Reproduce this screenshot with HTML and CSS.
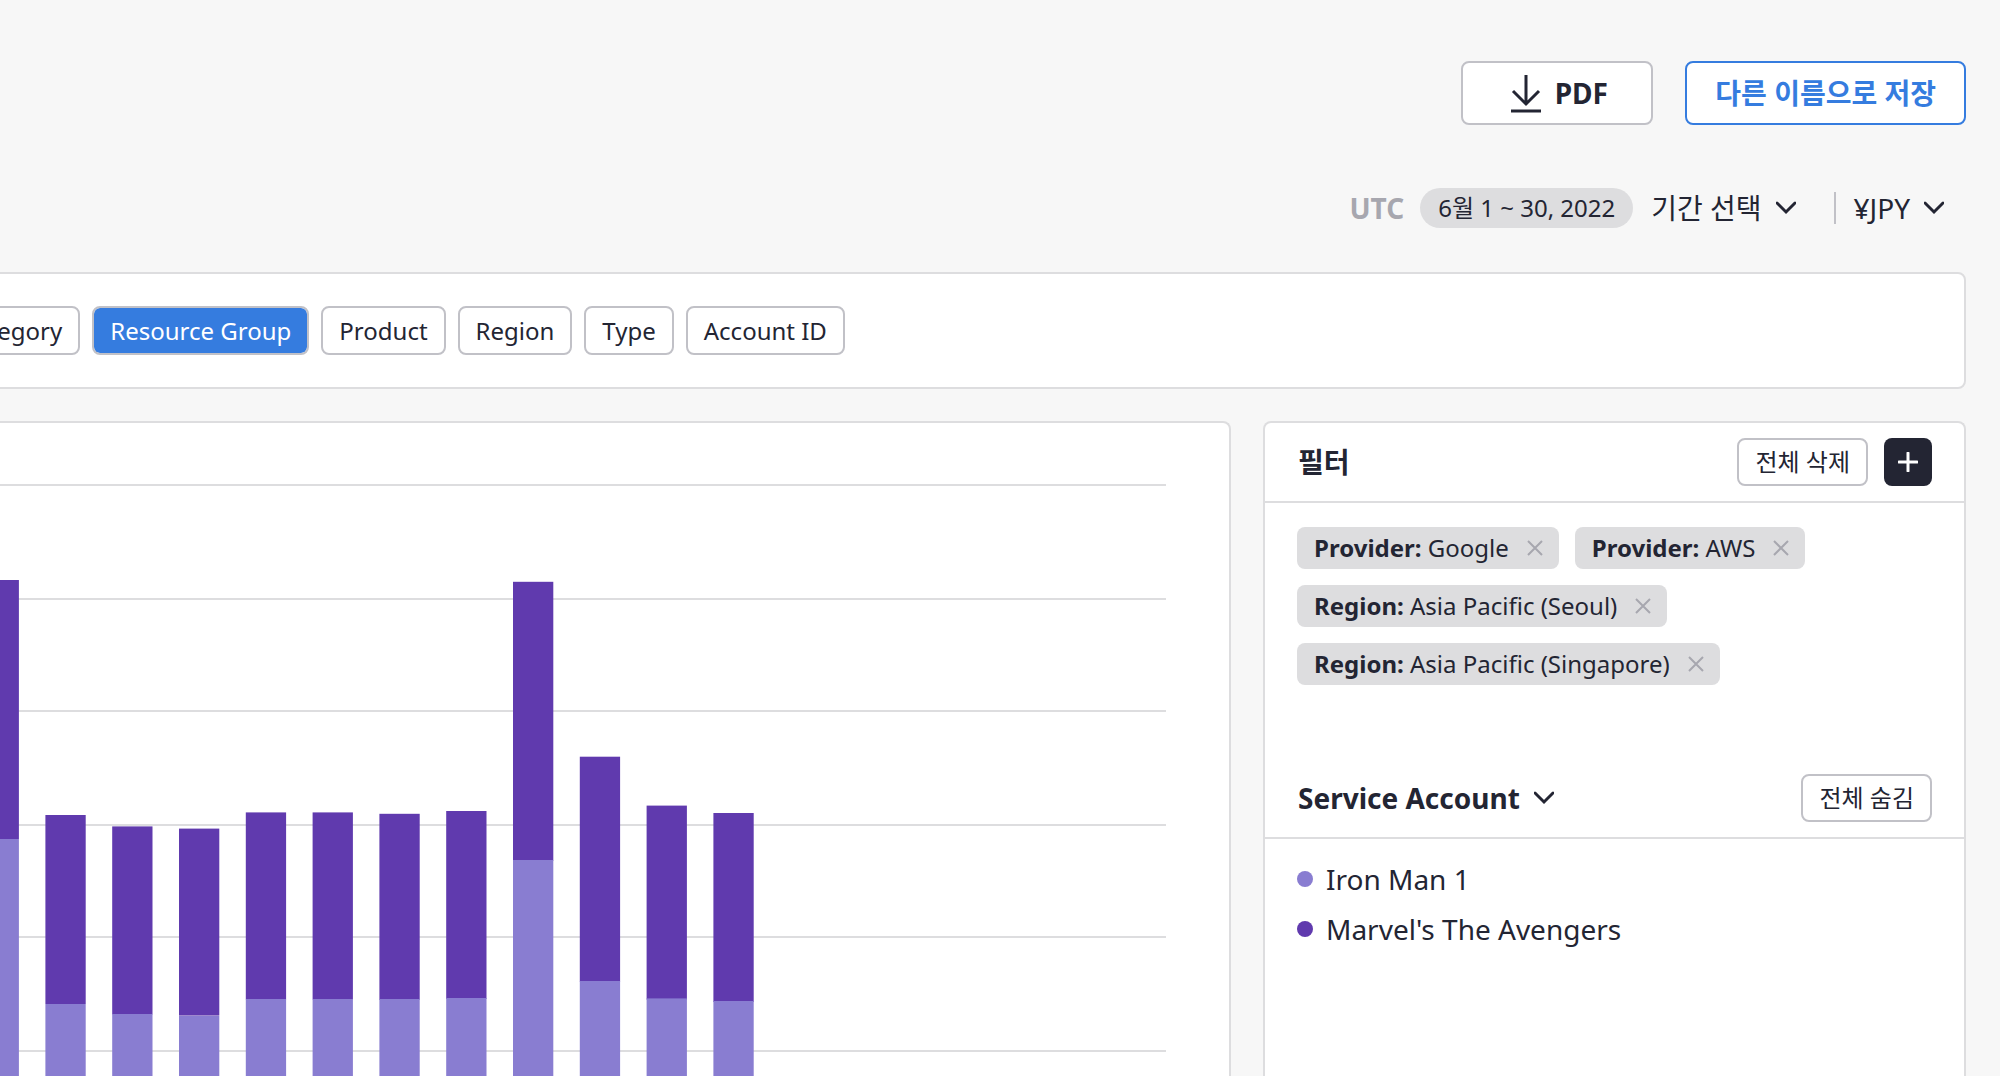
FILE: index.html
```html
<!DOCTYPE html>
<html lang="ko">
<head>
<meta charset="utf-8">
<meta name="viewport" content="width=device-width, initial-scale=1">
<title>Cost Analysis</title>
<link rel="stylesheet" href="styles.css">
</head>
<body>
<main class="page">
  <header class="actions">
    <button class="btn btn-large btn-pdf" type="button">
      <svg class="icon-download" viewBox="0 0 30 40" aria-hidden="true"><path d="M15 2v28M2 18l13 13 13-13" fill="none" stroke="currentColor" stroke-width="3"/><path d="M0 38h30" stroke="currentColor" stroke-width="3"/></svg>
      PDF
    </button>
    <button class="btn btn-large btn-save" type="button">다른 이름으로 저장</button>
  </header>

  <div class="period">
    <span class="utc">UTC</span>
    <span class="range">6월 1 ~ 30, 2022</span>
    <button class="picker" type="button">기간 선택
      <svg class="chevron" viewBox="0 0 20 14" aria-hidden="true"><path d="M1 2l9 9 9-9"/></svg>
    </button>
    <span class="divider"></span>
    <button class="picker" type="button">¥JPY
      <svg class="chevron" viewBox="0 0 20 14" aria-hidden="true"><path d="M1 2l9 9 9-9"/></svg>
    </button>
  </div>

  <nav class="card group-bar">
    <button class="btn btn-group" type="button">Category</button>
    <button class="btn btn-group selected" type="button">Resource Group</button>
    <button class="btn btn-group" type="button">Product</button>
    <button class="btn btn-group" type="button">Region</button>
    <button class="btn btn-group" type="button">Type</button>
    <button class="btn btn-group" type="button">Account ID</button>
  </nav>

  <div class="content">
    <section class="card chart-card">
      <svg class="chart" role="img" aria-label="Daily cost by service account">
        <g class="grid">
          <path d="M0 62H2000M0 176H2000M0 288H2000M0 402H2000M0 514H2000M0 628H2000"/>
        </g>
        <g class="series-avengers">
          <rect x="-21.4" y="157" width="40.3" height="259"/>
          <rect x="45.4" y="392" width="40.3" height="189"/>
          <rect x="112.2" y="403.4" width="40.3" height="188"/>
          <rect x="179" y="405.6" width="40.3" height="187"/>
          <rect x="245.8" y="389.4" width="40.3" height="187"/>
          <rect x="312.6" y="389.4" width="40.3" height="187"/>
          <rect x="379.4" y="390.8" width="40.3" height="186"/>
          <rect x="446.2" y="388" width="40.3" height="188"/>
          <rect x="513" y="158.8" width="40.3" height="279"/>
          <rect x="579.8" y="333.7" width="40.3" height="225"/>
          <rect x="646.6" y="382.6" width="40.3" height="194"/>
          <rect x="713.4" y="390" width="40.3" height="189"/>
        </g>
        <g class="series-ironman">
          <rect x="-21.4" y="416" width="40.3" height="400"/>
          <rect x="45.4" y="581" width="40.3" height="400"/>
          <rect x="112.2" y="591" width="40.3" height="400"/>
          <rect x="179" y="593" width="40.3" height="400"/>
          <rect x="245.8" y="576" width="40.3" height="400"/>
          <rect x="312.6" y="576" width="40.3" height="400"/>
          <rect x="379.4" y="576" width="40.3" height="400"/>
          <rect x="446.2" y="575" width="40.3" height="400"/>
          <rect x="513" y="437" width="40.3" height="400"/>
          <rect x="579.8" y="558" width="40.3" height="400"/>
          <rect x="646.6" y="575.4" width="40.3" height="400"/>
          <rect x="713.4" y="578" width="40.3" height="400"/>
        </g>
      </svg>
    </section>

    <aside class="card side">
      <div class="side-head">
        <h2 class="side-title">필터</h2>
        <button class="btn btn-small" type="button">전체 삭제</button>
        <button class="btn-add" type="button" aria-label="Add filter">
          <svg class="icon-plus" viewBox="0 0 20 20" aria-hidden="true"><path d="M10 1v18M1 10h18" stroke="currentColor" stroke-width="3" stroke-linecap="round"/></svg>
        </button>
      </div>
      <ul class="tags">
        <li class="tag"><span><b>Provider:</b> Google</span><button class="tag-x" type="button" aria-label="Remove"><svg class="icon-x" viewBox="0 0 14 14" aria-hidden="true"><path d="M0 0l14 14M14 0L0 14"/></svg></button></li>
        <li class="tag"><span><b>Provider:</b> AWS</span><button class="tag-x" type="button" aria-label="Remove"><svg class="icon-x" viewBox="0 0 14 14" aria-hidden="true"><path d="M0 0l14 14M14 0L0 14"/></svg></button></li>
        <li class="tag"><span><b>Region:</b> Asia Pacific (Seoul)</span><button class="tag-x" type="button" aria-label="Remove"><svg class="icon-x" viewBox="0 0 14 14" aria-hidden="true"><path d="M0 0l14 14M14 0L0 14"/></svg></button></li>
        <li class="tag"><span><b>Region:</b> Asia Pacific (Singapore)</span><button class="tag-x" type="button" aria-label="Remove"><svg class="icon-x" viewBox="0 0 14 14" aria-hidden="true"><path d="M0 0l14 14M14 0L0 14"/></svg></button></li>
      </ul>
      <div class="side-head">
        <button class="picker side-title" type="button">Service Account
          <svg class="chevron" viewBox="0 0 20 14" aria-hidden="true"><path d="M1 2l9 9 9-9"/></svg>
        </button>
        <button class="btn btn-small" type="button">전체 숨김</button>
      </div>
      <ul class="legend">
        <li class="legend-item"><span class="dot dot-ironman"></span>Iron Man 1</li>
        <li class="legend-item"><span class="dot dot-avengers"></span>Marvel's The Avengers</li>
      </ul>
    </aside>
  </div>
</main>
</body>
</html>
```

FILE: styles.css
```css
* {
  box-sizing: border-box;
}

body {
  margin: 0;
  background: #f7f7f7;
  color: #232533;
  font: 24px/32px "Noto Sans", "Noto Sans CJK KR", sans-serif;
}

button {
  margin: 0;
  padding: 0;
  border: 0;
  background: none;
  color: inherit;
  font: inherit;
  white-space: nowrap;
}

ul {
  margin: 0;
  padding: 0;
  list-style: none;
}

svg {
  display: block;
  flex: none;
}

.page {
  display: flex;
  flex-direction: column;
  height: 100vh;
  padding: 61px 34px 0 0;
  overflow: hidden;
}

.card {
  background: #fff;
  border: 2px solid #dddddf;
  border-radius: 8px;
}

.btn {
  display: flex;
  align-items: center;
  justify-content: center;
  background: #fff;
  border: 2px solid #c1c1c7;
  border-radius: 8px;
}

/* Top actions */
.actions {
  display: flex;
  justify-content: flex-end;
  gap: 32px;
}

.btn-large {
  height: 64px;
  padding: 0 28px;
  font-size: 28px;
  font-weight: 700;
}

.btn-pdf {
  min-width: 192px;
  padding: 0 28px 0 32px;
  gap: 14px;
}

.btn-save {
  border-color: #357cdf;
  color: #357cdf;
}

.icon-download {
  width: 30px;
  height: 40px;
}

/* Period row */
.period {
  display: flex;
  align-items: center;
  justify-content: flex-end;
  margin-top: 63px;
  padding-right: 22px;
  font-size: 28px;
}

.utc {
  margin-right: 16px;
  color: #a7a7af;
  font-weight: 700;
}

.range {
  margin-right: 18px;
  padding: 4px 18px;
  border-radius: 20px;
  background: #dddddf;
  font-size: 24px;
}

.picker {
  display: flex;
  align-items: center;
  gap: 14px;
}

.chevron {
  width: 20px;
  height: 14px;
  fill: none;
  stroke: currentColor;
  stroke-width: 3;
  stroke-linecap: round;
}

.divider {
  width: 2px;
  height: 32px;
  margin: 0 18px 0 38px;
  background: #c1c1c7;
}

/* Group-by bar, scrolled so that the first item is partly out of view */
.group-bar {
  display: flex;
  gap: 12px;
  margin: 44px 0 32px -60px;
  padding: 32px 0;
}

.btn-group {
  height: 49px;
  padding: 0 16px;
}

.selected {
  background: #357cdf;
  background-clip: padding-box;
  color: #fff;
}

/* Chart and side panel */
.content {
  display: grid;
  flex: 1;
  grid-template-columns: minmax(0, 1fr) 703px;
  gap: 32px;
  min-height: 0;
}

.content > .card {
  border-bottom: 0;
  border-radius: 8px 8px 0 0;
}

.content > .chart-card {
  padding-right: 63px;
  border-left: 0;
  border-top-left-radius: 0;
  overflow: hidden;
}

.chart {
  width: 100%;
  height: 100%;
}

.grid {
  stroke: #dddddf;
  stroke-width: 2;
}

.series-avengers {
  fill: #603aae;
}

.series-ironman {
  fill: #897dd1;
}

.side-head {
  display: flex;
  align-items: center;
  gap: 16px;
  height: 80px;
  padding: 0 32px 0 33px;
  border-bottom: 2px solid #dddddf;
}

.side-title {
  margin: 0 auto 0 0;
  font-size: 28px;
  font-weight: 700;
}

.btn-small {
  height: 48px;
  padding: 0 16px;
}

.btn-add {
  display: grid;
  place-items: center;
  width: 48px;
  height: 48px;
  border-radius: 8px;
  background: #232533;
  color: #fff;
}

.icon-plus {
  width: 20px;
  height: 20px;
}

.tags {
  display: flex;
  flex-wrap: wrap;
  gap: 16px;
  padding: 24px 32px 74px;
}

.tag {
  display: flex;
  align-items: center;
  gap: 19px;
  height: 42px;
  padding: 0 17px;
  border-radius: 8px;
  background: #dddddf;
}

.icon-x {
  width: 14px;
  height: 14px;
  overflow: visible;
  fill: none;
  stroke: #a7a7af;
  stroke-width: 2;
}

.legend {
  display: grid;
  gap: 18px;
  padding: 24px 32px;
  font-size: 28px;
}

.legend-item {
  display: flex;
  align-items: center;
  gap: 13px;
}

.dot {
  width: 16px;
  height: 16px;
  border-radius: 50%;
}

.dot-ironman {
  background: #897dd1;
}

.dot-avengers {
  background: #603aae;
}
```
